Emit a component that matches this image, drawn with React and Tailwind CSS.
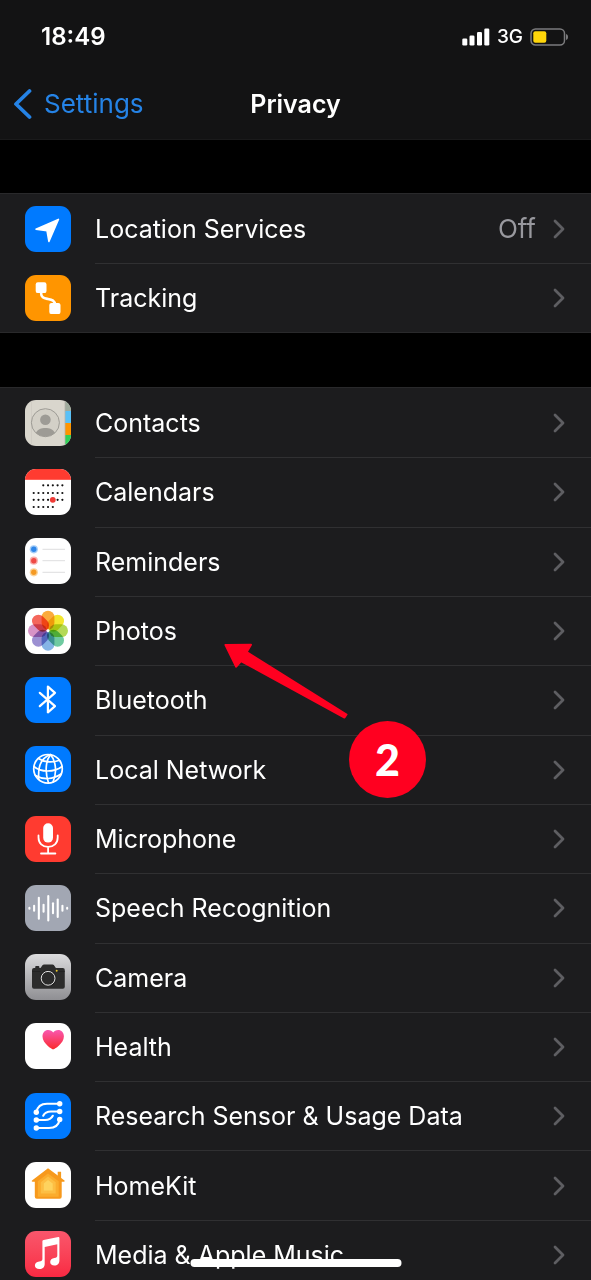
import React from "react";

function Tile({ className = "", children }) {
  return (
    <svg viewBox="0 0 46 46" className={`size-[46px] shrink-0 rounded-[11px] ${className}`} aria-hidden="true">
      {children}
    </svg>
  );
}

function LocationIcon() {
  return (
    <Tile className="bg-[#007aff]">
      <path d="M33.4 13.4 23.9 35.4 22 24.6 11 23.2Z" fill="#fff" stroke="#fff" strokeWidth="1.6" strokeLinejoin="round" />
    </Tile>
  );
}

function TrackingIcon() {
  return (
    <Tile className="bg-[#ff9500]">
      <path d="M16 17c0 6 3 6.200 7 7s7 1.500 7 6" fill="none" stroke="#fff" strokeWidth="2.600" />
      <rect x="10.700" y="7.300" width="10.800" height="10.800" rx="2.200" fill="#fff" />
      <rect x="24.300" y="27.900" width="11.200" height="11.200" rx="2.200" fill="#fff" />
    </Tile>
  );
}

function ContactsIcon() {
  return (
    <Tile className="bg-[#d9d6cd]">
      <rect x="40" y="0" width="6" height="11" fill="#9fab9d" />
      <rect x="40" y="11" width="6" height="12" fill="#5ac1f7" />
      <rect x="40" y="23" width="6" height="12" fill="#ff9500" />
      <rect x="40" y="35" width="6" height="11" fill="#30d158" />
      <path d="M6.500 0v46" stroke="#cbc8bf" strokeWidth="0.600" />
      <path d="M40 0v46" stroke="#b5b2a9" strokeWidth="0.800" />
      <circle cx="20.400" cy="22.700" r="14" fill="#d3d0c7" stroke="#9d9b95" strokeWidth="1" />
      <circle cx="20.400" cy="19.700" r="5.300" fill="#9d9b95" />
      <path d="M10.800 32.800c2-3.600 5.600-4.900 9.600-4.900s7.600 1.300 9.600 4.900a14 14 0 0 1-19.200 0Z" fill="#9d9b95" />
    </Tile>
  );
}

function CalendarIcon() {
  const rows = [
    [16.300, 2, 6],
    [24, 0, 6],
    [30.800, 0, 6],
    [38, 0, 4],
  ];
  return (
    <Tile className="bg-white">
      <rect width="46" height="10.800" fill="#ff3b30" />
      {rows.map(([y, from, to]) =>
        Array.from({ length: to - from + 1 }, (_, i) => (
          <circle key={`${y}-${i}`} cx={8.700 + (from + i) * 4.780} cy={y} r="1.100" fill="#111" />
        ))
      )}
      <circle cx="27.800" cy="30.800" r="2.900" fill="#ef3b36" />
    </Tile>
  );
}

function RemindersIcon() {
  const items = [
    [11.300, "#2f86e8", "#a5cdf7"],
    [22.700, "#ef4a45", "#f9b0ae"],
    [34.300, "#f59a23", "#fbd59c"],
  ];
  return (
    <Tile className="bg-white">
      {items.map(([y, color, halo]) => (
        <g key={y}>
          <circle cx="8.800" cy={y} r="4.100" fill={halo} />
          <circle cx="8.800" cy={y} r="2.700" fill={color} />
          <path d={`M17.500 ${y}H40`} stroke="#d4d4d6" strokeWidth="0.800" />
        </g>
      ))}
    </Tile>
  );
}

function PhotosIcon() {
  const petals = ["#fbab3c", "#f3e62e", "#b4d957", "#6fcaa0", "#85b4e6", "#9c90d2", "#d793c6", "#f4675c"];
  return (
    <Tile className="bg-white">
      {petals.map((color, i) => (
        <rect
          key={color}
          x="16.600"
          y="2.700"
          width="12.800"
          height="18.800"
          rx="6.400"
          fill={color}
          className="mix-blend-multiply"
          transform={`rotate(${i * 45} 23 22.700)`}
        />
      ))}
      <circle cx="23" cy="22.700" r="1.300" fill="#fff" />
    </Tile>
  );
}

function BluetoothIcon() {
  return (
    <Tile className="bg-[#007aff]">
      <path d="M14.800 15.800 30 29.200 22.900 35.400V9.600L30 15.800 14.800 29.200" fill="none" stroke="#fff" strokeWidth="2.200" strokeLinejoin="round" strokeLinecap="round" />
    </Tile>
  );
}

function NetworkIcon() {
  return (
    <Tile className="bg-[#007aff]">
      <g fill="none" stroke="#fff" strokeWidth="1.700" strokeLinecap="round">
        <circle cx="23" cy="22.800" r="14.300" />
        <path d="M25.500 8.700C18 11 12.500 18 13.800 33.500" />
        <path d="M25.500 8.700C21 14 19.500 25 23.500 37" />
        <path d="M25.500 8.700C30.500 14 32.500 26 28 36" />
        <path d="M13.500 12.500C19 16.500 28 16.800 34.500 14.300" />
        <path d="M8.900 20.500C16 26.500 29 26.500 37.100 20.500" />
        <path d="M10.500 29.500C18 34 28 33.500 36 28" />
      </g>
    </Tile>
  );
}

function MicrophoneIcon() {
  return (
    <Tile className="bg-[#ff3b30]">
      <rect x="18.200" y="7.200" width="9.800" height="19.400" rx="4.900" fill="#fff" />
      <path d="M13.500 19.500v2c0 5.700 4 9.300 9.600 9.300s9.600-3.600 9.600-9.300v-2M23.100 31v6.300M16 37.500h14.400" fill="none" stroke="#fff" strokeWidth="1.800" strokeLinecap="round" />
    </Tile>
  );
}

function SpeechIcon() {
  const bars = [0.800, 5, 21, 7, 24.500, 10, 17.500, 5, 0.800];
  return (
    <Tile className="bg-[#a2a7b3]">
      {bars.map((h, i) => (
        <path key={i} d={`M${4.400 + i * 4.720} ${23.300 - h / 2}v${h}`} stroke="#fff" strokeWidth="2.100" strokeLinecap="round" />
      ))}
    </Tile>
  );
}

function CameraIcon() {
  return (
    <Tile className="bg-linear-to-b from-[#dcdcde] to-[#8f8f93]">
      <rect x="10.200" y="12" width="4.200" height="2.500" rx="1" fill="#2a2a2a" />
      <path d="M9 14h6c1.500 0 1.800-3.600 4-3.600h8.500c2.200 0 2.500 3.600 4 3.600h6.300a2 2 0 0 1 2 2v16.700a2 2 0 0 1-2 2H9a2 2 0 0 1-2-2V16a2 2 0 0 1 2-2Z" fill="#2c2c2c" />
      <path d="M7 17.500h8.500M31 17.500h8.800" stroke="#202020" strokeWidth="0.700" />
      <circle cx="23.100" cy="24.300" r="8.300" fill="#232323" />
      <circle cx="23.100" cy="24.300" r="6.900" fill="#2a2a2a" stroke="#e4e4e4" strokeWidth="1" />
      <circle cx="31.700" cy="16.700" r="1" fill="#e8c62a" />
    </Tile>
  );
}

function HealthIcon() {
  return (
    <Tile className="bg-white">
      <defs>
        <linearGradient id="heart" x1="0" y1="0" x2="0" y2="1">
          <stop offset="0" stopColor="#f957b0" />
          <stop offset="1" stopColor="#fb2a2c" />
        </linearGradient>
      </defs>
      <path d="M28.200 26.300c-1.200 0-10.700-6-10.700-12.900 0-3.700 2.500-6.300 5.700-6.300 2.200 0 4 .9 5 2.400 1-1.500 2.800-2.400 5-2.400 3.200 0 5.700 2.600 5.700 6.300 0 6.900-9.500 12.900-10.700 12.900Z" fill="url(#heart)" />
    </Tile>
  );
}

function ResearchIcon() {
  const nodes = [
    [34.700, 10.700],
    [34.700, 18.500],
    [34.700, 26.500],
    [11.300, 19.300],
    [11.300, 27],
    [11.300, 35],
  ];
  return (
    <Tile className="bg-[#007aff]">
      <path
        d="M34.700 10.700H22c-6.500 0-9.700 3.300-10.700 8.600M34.700 18.500H26c-4 0-6.500 1.500-7.800 4.200M11.300 27H20c4 0 6.500-1.500 7.800-4.200M11.300 35H24c6.500 0 9.700-3.300 10.700-8.500"
        fill="none"
        stroke="#fff"
        strokeWidth="2.100"
        strokeLinecap="round"
      />
      {nodes.map(([x, y]) => (
        <circle key={`${x}-${y}`} cx={x} cy={y} r="2.700" fill="#fff" />
      ))}
    </Tile>
  );
}

function HomeIcon() {
  return (
    <Tile className="bg-white">
      <path d="M32.700 9.800h3.400v8h-3.400Z" fill="#f59a1d" />
      <path d="M23 6.300 7 18.600c-.6.600-.2 1.200.5 1.200h2.300v15a2 2 0 0 0 2 2h22.900a2 2 0 0 0 2-2v-15h2.300c.7 0 1-.6.500-1.200Z" fill="#f7991c" />
      <path d="M23 11.500 12.800 19.300V34.800H33.700V19.300Z" fill="#fbac2d" />
      <path d="M23 14.500 15.800 20.300V31.500H30.700V20.300Z" fill="#fdbe43" />
      <path d="M23 18 18.800 21.500V28.500H27.700V21.500Z" fill="#fed35e" />
    </Tile>
  );
}

function MusicIcon() {
  return (
    <Tile className="bg-linear-to-b from-[#f9566c] to-[#f92842]">
      <path d="M17.400 10.300c0-.8.400-1.200 1.200-1.400L33.300 6c.7-.1 1.100.2 1.100.9v22.600c0 3-2 5-5 5-2.600 0-4.200-1.500-4.200-3.500 0-2.300 1.600-3.600 4.200-4 2-.3 2.900-.7 2.900-2.500V13.200L19.700 16v17c0 3-2 5-5.400 5-2.600 0-4.400-1.500-4.400-3.600 0-2.200 1.700-3.500 4.300-3.900 2.200-.3 3.200-.8 3.200-2.500Z" fill="#fff" />
    </Tile>
  );
}

function Chevron() {
  return (
    <svg viewBox="0 0 14 22" className="h-[22px] w-[14px] shrink-0" aria-hidden="true">
      <path d="M3 3 11 11 3 19" fill="none" stroke="#5e5e62" strokeWidth="2.800" strokeLinecap="round" strokeLinejoin="round" />
    </svg>
  );
}

function PhotosPointer() {
  return (
    <div className="pointer-events-none absolute top-[45px] left-[222px] z-10 h-[158px] w-[206px]">
      <svg viewBox="0 0 206 158" className="size-full" aria-hidden="true">
        <path d="M3.500 4 29 3.700 24.700 11 124.500 73.500 122.500 76.500 19 20 14.200 25.700Z" fill="#ff0020" stroke="#ff0020" strokeWidth="2" strokeLinejoin="round" />
      </svg>
      <span className="absolute right-[2px] bottom-[1px] flex size-[77px] items-center justify-center rounded-full bg-[#ff0020] font-['Lato',sans-serif] text-[43px] leading-none font-black text-white">
        2
      </span>
    </div>
  );
}

function Row({ icon: Icon, label, value, first, children }) {
  return (
    <li className="relative flex flex-1">
      <a href="#" className="flex flex-1 items-center gap-6 pl-[25px]">
        <Icon />
        <span className={`flex flex-1 items-center self-stretch border-t pr-[25px] ${first ? "border-transparent" : "border-[#303032]"}`}>
          <span className="flex-1 whitespace-nowrap">{label}</span>
          {value && <span className="mr-4 text-[26px] text-[#98989e]">{value}</span>}
          <Chevron />
        </span>
      </a>
      {children}
    </li>
  );
}

const general = [
  { icon: LocationIcon, label: "Location Services", value: "Off" },
  { icon: TrackingIcon, label: "Tracking" },
];

const apps = [
  { icon: ContactsIcon, label: "Contacts" },
  { icon: CalendarIcon, label: "Calendars" },
  { icon: RemindersIcon, label: "Reminders" },
  { icon: PhotosIcon, label: "Photos", pointer: true },
  { icon: BluetoothIcon, label: "Bluetooth" },
  { icon: NetworkIcon, label: "Local Network" },
  { icon: MicrophoneIcon, label: "Microphone" },
  { icon: SpeechIcon, label: "Speech Recognition" },
  { icon: CameraIcon, label: "Camera" },
  { icon: HealthIcon, label: "Health" },
  { icon: ResearchIcon, label: "Research Sensor & Usage Data" },
  { icon: HomeIcon, label: "HomeKit" },
  { icon: MusicIcon, label: "Media & Apple Music" },
];

function StatusBar() {
  return (
    <div className="flex h-[73px] items-center justify-between pr-[22px] pl-[41px]">
      <span className="text-[24px] font-semibold">18:49</span>
      <div className="flex items-center gap-[7px]">
        <svg viewBox="0 0 28 18" className="h-[18px] w-7" aria-label="Signal strength">
          <g fill="#fff">
            <rect x="0.300" y="10.500" width="5" height="7" rx="1.300" />
            <rect x="7.500" y="7.500" width="5" height="10" rx="1.300" />
            <rect x="15" y="4" width="5" height="13.500" rx="1.300" />
            <rect x="22.300" y="0.500" width="5" height="17" rx="1.300" />
          </g>
        </svg>
        <span className="text-[19px] font-medium">3G</span>
        <svg viewBox="0 0 39 18" className="h-[18px] w-[39px]" aria-label="Battery">
          <rect x="1" y="1" width="33.500" height="16" rx="4.500" fill="none" stroke="#7b7b7d" strokeWidth="1.500" />
          <rect x="3.300" y="3.200" width="13" height="11.600" rx="2" fill="#ffd60a" />
          <path d="M36 6v6c1.300-.4 2-1.500 2-3s-.7-2.600-2-3Z" fill="#7b7b7d" />
        </svg>
      </div>
    </div>
  );
}

export default function App() {
  return (
    <div className="relative flex h-screen flex-col overflow-hidden bg-black font-['Inter',sans-serif] text-[25px] leading-8 text-white">
      <header className="shrink-0 border-b border-[#1a1a1b] bg-[#131314]">
        <StatusBar />
        <nav className="grid h-[66px] grid-cols-[1fr_auto_1fr] items-center pb-1 text-[26px]">
          <a href="#" className="flex items-center gap-3 pl-3 text-[#2583e6]">
            <svg viewBox="0 0 20 32" className="h-8 w-5" aria-hidden="true">
              <path d="M17.500 3 4 16 17.500 29" fill="none" stroke="#2583e6" strokeWidth="3.800" strokeLinecap="round" strokeLinejoin="round" />
            </svg>
            Settings
          </a>
          <h1 className="text-[25px] font-semibold">Privacy</h1>
        </nav>
      </header>
      <main className="flex-1 overflow-y-auto [scrollbar-width:none]">
        <ul className="mt-[53px] flex min-h-[140px] flex-col border-y border-[#29292b] bg-[#1c1c1e]">
          {general.map((item, i) => (
            <Row key={item.label} {...item} first={i === 0} />
          ))}
        </ul>
        <ul className="mt-[54px] flex min-h-[902px] flex-col border-t border-[#29292b] bg-[#1c1c1e]">
          {apps.map(({ pointer, ...item }, i) => (
            <Row key={item.label} {...item} first={i === 0}>
              {pointer && <PhotosPointer />}
            </Row>
          ))}
        </ul>
      </main>
      <div className="absolute bottom-[13px] left-1/2 h-2 w-[211px] -translate-x-1/2 rounded-full bg-white" />
    </div>
  );
}
